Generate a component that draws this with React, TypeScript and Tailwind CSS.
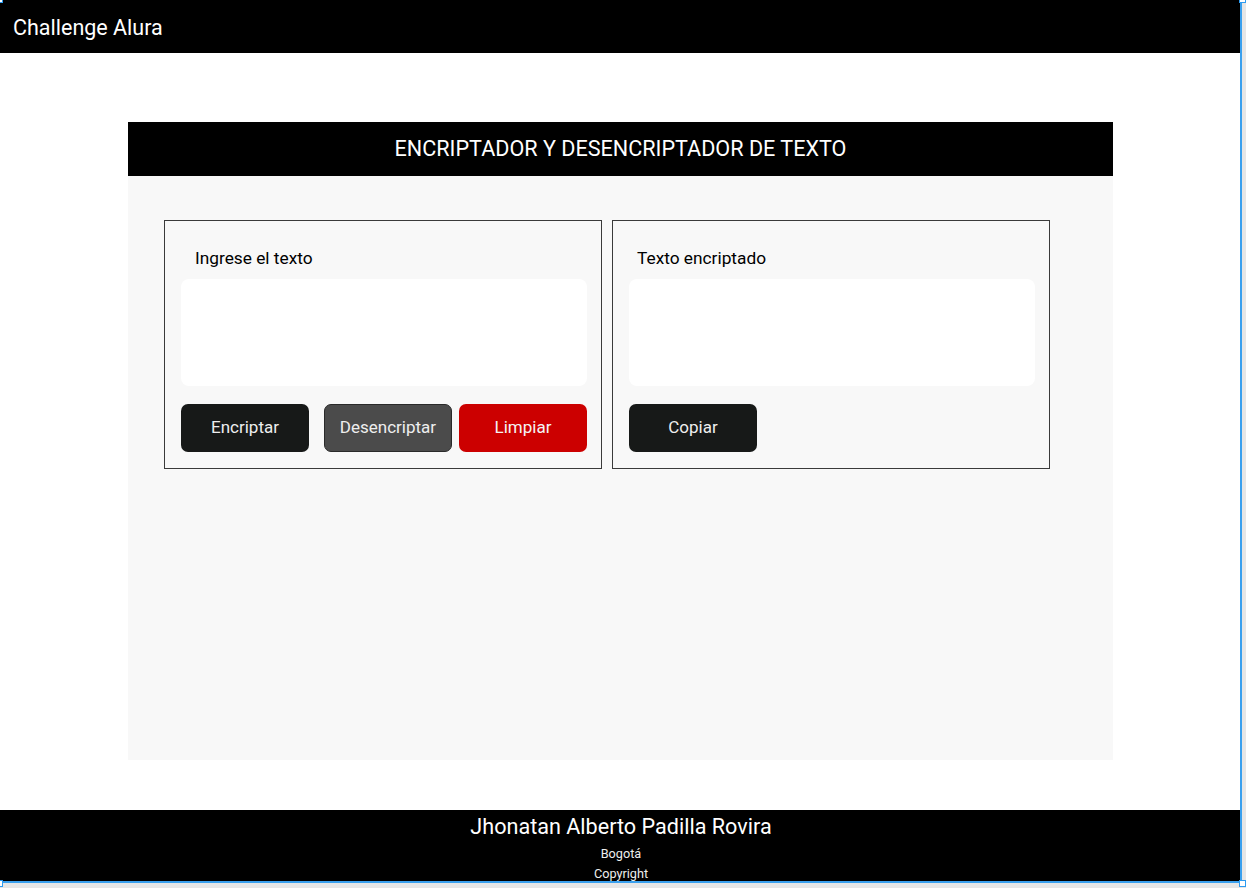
import React from "react";

function Handle({ className }: { className: string }) {
  return <div className={`absolute w-[7px] h-[7px] bg-white border border-[#2d9bf0] ${className}`} />;
}

export default function App() {
  return (
    <div className="relative w-full h-[888px] bg-[#e6e6e6] overflow-hidden font-['Roboto',sans-serif]">
      <div className="relative flex flex-col w-[1242px] h-[883px] bg-white">
        <header className="h-[53px] bg-black flex items-center px-[13px] pt-[3px]">
          <span className="text-white text-[21.5px]">Challenge Alura</span>
        </header>

        <main className="flex-1 flex flex-col pl-[128px] pt-[69px]">
          <section className="w-[985px] h-[638px] flex flex-col bg-[#f8f8f8]">
            <div className="h-[54px] bg-black flex items-center justify-center pt-[1px]">
              <h1 className="text-white text-[21.6px]">ENCRIPTADOR Y DESENCRIPTADOR DE TEXTO</h1>
            </div>
            <div className="flex gap-[10px] pl-[36px] pt-[44px]">
              <div className="w-[438px] h-[249px] border border-[#3a3a3a] flex flex-col pl-[16px] pr-[14px] pt-[27px]">
                <label className="pl-[14px] text-[17.3px] text-black leading-[20px]">Ingrese el texto</label>
                <div className="mt-[11px] h-[107px] bg-white rounded-[8px]" />
                <div className="flex mt-[18px]">
                  <button className="w-[128px] h-[48px] rounded-[7px] bg-[#171918] text-[#eeeeee] text-[17px]">Encriptar</button>
                  <button className="ml-[15px] w-[128px] h-[48px] rounded-[7px] bg-[#4b4b4b] border border-[#2a2a2a] text-[#eeeeee] text-[17px]">Desencriptar</button>
                  <button className="ml-[7px] w-[128px] h-[48px] rounded-[7px] bg-[#cc0000] text-[#f4f4f4] text-[17px]">Limpiar</button>
                </div>
              </div>
              <div className="w-[438px] h-[249px] border border-[#3a3a3a] flex flex-col pl-[16px] pr-[14px] pt-[27px]">
                <label className="pl-[8px] text-[17.3px] text-black leading-[20px]">Texto encriptado</label>
                <div className="mt-[11px] h-[107px] bg-white rounded-[8px]" />
                <div className="flex mt-[18px]">
                  <button className="w-[128px] h-[48px] rounded-[7px] bg-[#171918] text-[#eeeeee] text-[17px]">Copiar</button>
                </div>
              </div>
            </div>
          </section>
        </main>

        <footer className="h-[73px] mt-[50px] bg-black flex flex-col items-center pt-[4px]">
          <span className="text-white text-[21.6px] leading-[26px]">Jhonatan Alberto Padilla Rovira</span>
          <span className="text-[#eeeeee] text-[12.7px] leading-[14px] mt-[7px]">Bogotá</span>
          <span className="text-[#eeeeee] text-[12.7px] leading-[14px] mt-[6px]">Copyright</span>
        </footer>

        <div className="absolute inset-0 border-r-2 border-b-2 border-[#3aa0ee] pointer-events-none" />
        <Handle className="-left-[4px] -top-[4px]" />
        <Handle className="-right-[4px] -top-[4px]" />
        <Handle className="-left-[4px] -bottom-[4px]" />
        <Handle className="-right-[4px] -bottom-[4px]" />
      </div>
    </div>
  );
}
